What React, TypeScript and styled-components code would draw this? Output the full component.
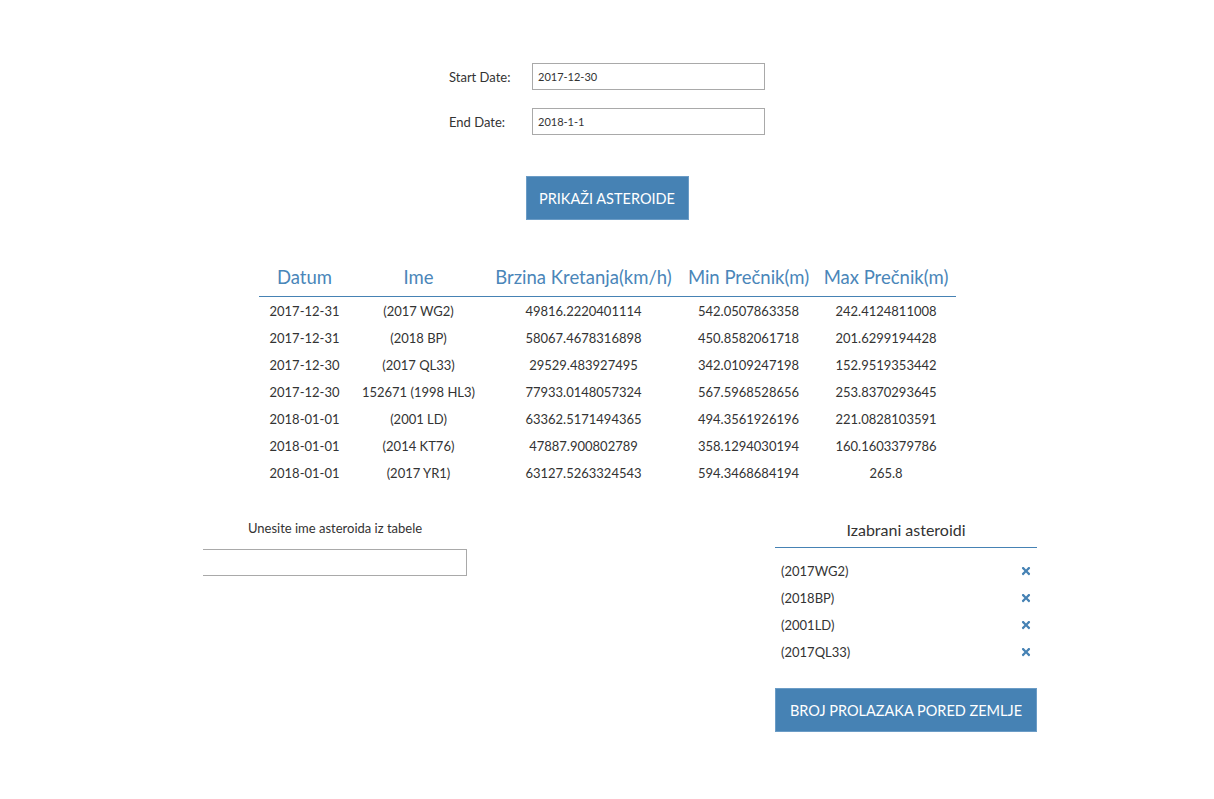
import { createGlobalStyle, styled } from 'styled-components';
import { FaTimes } from 'react-icons/fa';

const ASTEROIDS = [
  { date: '2017-12-31', name: '(2017 WG2)', speed: '49816.2220401114', min: '542.0507863358', max: '242.4124811008' },
  { date: '2017-12-31', name: '(2018 BP)', speed: '58067.4678316898', min: '450.8582061718', max: '201.6299194428' },
  { date: '2017-12-30', name: '(2017 QL33)', speed: '29529.483927495', min: '342.0109247198', max: '152.9519353442' },
  { date: '2017-12-30', name: '152671 (1998 HL3)', speed: '77933.0148057324', min: '567.5968528656', max: '253.8370293645' },
  { date: '2018-01-01', name: '(2001 LD)', speed: '63362.5171494365', min: '494.3561926196', max: '221.0828103591' },
  { date: '2018-01-01', name: '(2014 KT76)', speed: '47887.900802789', min: '358.1294030194', max: '160.1603379786' },
  { date: '2018-01-01', name: '(2017 YR1)', speed: '63127.5263324543', min: '594.3468684194', max: '265.8' },
];

const COLUMNS = [
  { title: 'Datum', width: 92 },
  { title: 'Ime', width: 136 },
  { title: 'Brzina Kretanja(km/h)', width: 194 },
  { title: 'Min Prečnik(m)', width: 136 },
  { title: 'Max Prečnik(m)', width: 139 },
];

const SELECTED = ['(2017WG2)', '(2018BP)', '(2001LD)', '(2017QL33)'];

const App = () => {
  return (
    <>
      <GlobalStyle />
      <Page>
        <DateForm>
          <FormRow>
            <Label>Start Date:</Label>
            <DateInput defaultValue="2017-12-30" />
          </FormRow>
          <FormRow>
            <Label>End Date:</Label>
            <DateInput defaultValue="2018-1-1" />
          </FormRow>
        </DateForm>

        <ShowButton>PRIKAŽI ASTEROIDE</ShowButton>

        <Table>
          <colgroup>
            {COLUMNS.map((col) => (
              <col key={col.title} style={{ width: col.width }} />
            ))}
          </colgroup>
          <thead>
            <tr>
              {COLUMNS.map((col) => (
                <HeadCell key={col.title}>{col.title}</HeadCell>
              ))}
            </tr>
          </thead>
          <tbody>
            {ASTEROIDS.map((a) => (
              <tr key={a.name}>
                <Cell>{a.date}</Cell>
                <Cell>{a.name}</Cell>
                <Cell>{a.speed}</Cell>
                <Cell>{a.min}</Cell>
                <Cell>{a.max}</Cell>
              </tr>
            ))}
          </tbody>
        </Table>

        <Bottom>
          <SearchBox>
            <SearchLabel>Unesite ime asteroida iz tabele</SearchLabel>
            <SearchInput />
          </SearchBox>

          <SelectedBox>
            <SelectedTitle>Izabrani asteroidi</SelectedTitle>
            <SelectedList>
              {SELECTED.map((item) => (
                <SelectedItem key={item}>
                  <span>{item}</span>
                  <RemoveIcon>
                    <FaTimes size={12} />
                  </RemoveIcon>
                </SelectedItem>
              ))}
            </SelectedList>
            <WideButton>BROJ PROLAZAKA PORED ZEMLJE</WideButton>
          </SelectedBox>
        </Bottom>
      </Page>
    </>
  );
};

export default App;

const GlobalStyle = createGlobalStyle`
  body {
    margin: 0;
    background: #fff;
    font-family: Lato, 'Open Sans', sans-serif;
    color: #333;
  }
`;

const Page = styled.div`
  display: flex;
  flex-direction: column;
  align-items: center;
  padding-top: 63px;
  width: 1214px;
`;

const DateForm = styled.div`
  display: flex;
  flex-direction: column;
  gap: 18px;
  width: 316px;
`;

const FormRow = styled.div`
  display: flex;
  align-items: center;
`;

const Label = styled.label`
  width: 83px;
  font-size: 13px;
  color: #333;
`;

const DateInput = styled.input`
  width: 233px;
  height: 27px;
  box-sizing: border-box;
  border: 1px solid #a9a9a9;
  padding: 0 5px;
  font-family: Lato, 'Open Sans', sans-serif;
  font-size: 11px;
  color: #333;
  outline: none;
`;

const ShowButton = styled.button`
  margin-top: 41px;
  width: 163px;
  height: 44px;
  border: 1px solid #6b9cc6;
  background: #4682b4;
  color: #fff;
  font-family: Lato, 'Open Sans', sans-serif;
  font-size: 14.5px;
  cursor: pointer;
`;

const Table = styled.table`
  margin-top: 38px;
  border-collapse: collapse;
  table-layout: fixed;
  width: 697px;
`;

const HeadCell = styled.th`
  height: 38px;
  padding: 0;
  font-weight: 400;
  font-size: 18.5px;
  color: #4a86b9;
  text-align: center;
  border-bottom: 1px solid #4682b4;
  white-space: nowrap;
`;

const Cell = styled.td`
  height: 27px;
  padding: 0;
  font-size: 13px;
  text-align: center;
  color: #333;
  white-space: nowrap;
`;

const Bottom = styled.div`
  align-self: stretch;
  display: flex;
  justify-content: space-between;
  align-items: flex-start;
  margin: 34px 177px 0 203px;
`;

const SearchBox = styled.div`
  display: flex;
  flex-direction: column;
  align-items: center;
  width: 264px;
`;

const SearchLabel = styled.div`
  font-size: 13px;
  color: #333;
  line-height: 16px;
`;

const SearchInput = styled.input`
  margin-top: 13px;
  width: 264px;
  height: 27px;
  box-sizing: border-box;
  border: 1px solid #a9a9a9;
  border-left: none;
  outline: none;
`;

const SelectedBox = styled.div`
  display: flex;
  flex-direction: column;
  width: 262px;
`;

const SelectedTitle = styled.div`
  font-size: 16px;
  text-align: center;
  color: #333;
  padding-bottom: 8px;
  border-bottom: 1px solid #4682b4;
`;

const SelectedList = styled.ul`
  list-style: none;
  margin: 9px 0 0;
  padding: 0;
`;

const SelectedItem = styled.li`
  display: flex;
  justify-content: space-between;
  align-items: center;
  height: 27px;
  padding: 0 5px 0 6px;
  font-size: 13px;
  color: #333;
`;

const RemoveIcon = styled.span`
  display: flex;
  color: #4682b4;
  cursor: pointer;
`;

const WideButton = styled.button`
  margin-top: 23px;
  height: 44px;
  border: 1px solid #6b9cc6;
  background: #4682b4;
  color: #fff;
  font-family: Lato, 'Open Sans', sans-serif;
  font-size: 14.5px;
  cursor: pointer;
`;
